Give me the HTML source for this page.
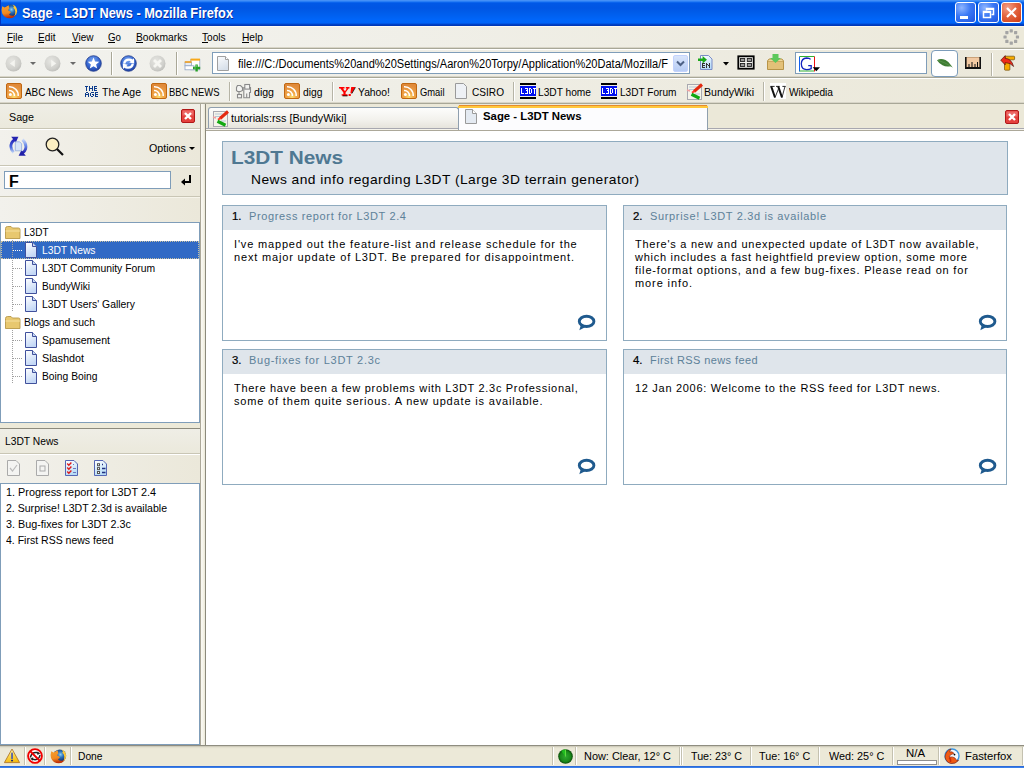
<!DOCTYPE html>
<html><head><meta charset="utf-8"><style>
html,body{margin:0;padding:0;width:1024px;height:768px;overflow:hidden;background:#fff;}
body{position:relative;font-family:"Liberation Sans",sans-serif;}
div,svg{position:absolute;box-sizing:border-box;}
.t{white-space:pre;}
</style></head><body>
<div style="left:0px;top:0px;width:1024px;height:26px;background:linear-gradient(to bottom,#4a94f8 0px,#3c8cf6 1px,#1470f4 2px,#0058e6 3px,#0056e4 8px,#005ce9 12px,#0062f3 17px,#0066fa 20px,#0064f8 23px,#004bd4 24px,#0038b8 25px,#0038b8 26px)"></div><div style="left:0px;top:0px;width:1px;height:26px;background:#0034c0"></div><svg style="left:1px;top:3px;" width="17" height="17" viewBox="0 0 17 17"><defs><radialGradient id="ffg1" cx="0.55" cy="0.4" r="0.6"><stop offset="0" stop-color="#8ad0f4"/><stop offset="0.4" stop-color="#2a70b8"/><stop offset="1" stop-color="#0a1e5a"/></radialGradient><linearGradient id="ffo1" x1="0" y1="0" x2="0.2" y2="1"><stop offset="0" stop-color="#f6a030"/><stop offset="0.65" stop-color="#f08a20"/><stop offset="1" stop-color="#c03008"/></linearGradient></defs><circle cx="9.8" cy="7.8" r="6.4" fill="url(#ffg1)"/><path d="M1.2 3.2 L3.6 4.4 L7.6 2.2 L8.4 5.4 L7 7.2 Q8.6 7.6 10 9.4 Q8.6 10.2 8 11.8 Q10.5 13.2 13.2 12.4 L14.8 11.2 Q14 14.8 9 15.3 Q3 15.3 1 10 Q0.2 6.6 1.2 3.2Z" fill="url(#ffo1)"/><path d="M11.6 1.6 Q15.9 3 16.2 8.2 Q16 11.4 13.4 13.2 Q14.4 11 14.3 8.6 Q14.1 5.8 12.2 4.4 L13 3.4Z" fill="#fcc838"/></svg><div style="left:955px;top:2px;width:21px;height:21px;background:radial-gradient(circle at 30% 25%,#8fb6ff 0,#3a78f5 45%,#1f55e0 100%);border:1px solid #fff;border-radius:3px;"></div><div style="left:978px;top:2px;width:21px;height:21px;background:radial-gradient(circle at 30% 25%,#8fb6ff 0,#3a78f5 45%,#1f55e0 100%);border:1px solid #fff;border-radius:3px;"></div><div style="left:1001px;top:2px;width:21px;height:21px;background:radial-gradient(circle at 30% 25%,#f3a08a 0,#e3643e 45%,#cf3a12 100%);border:1px solid #fff;border-radius:3px;"></div><div style="left:960px;top:16px;width:8px;height:3px;background:#fff"></div><svg style="left:978px;top:2px;" width="21" height="21" viewBox="0 0 21 21"><rect x="5.5" y="9.5" width="7" height="6" fill="none" stroke="#fff" stroke-width="1.5"/><rect x="5" y="9" width="8" height="2" fill="#fff"/><path d="M8.5 8.5 V6.5 H15.5 V12.5 H13.5" fill="none" stroke="#fff" stroke-width="1.5"/><rect x="8" y="6" width="8" height="2" fill="#fff"/></svg><svg style="left:1001px;top:2px;" width="21" height="21" viewBox="0 0 21 21"><path d="M6 6 L15 15 M15 6 L6 15" stroke="#fff" stroke-width="2.2"/></svg><div style="left:0px;top:26px;width:1024px;height:22px;background:linear-gradient(to right,#f3f3ef 0,#f0efe8 40%,#ece9da 100%)"></div><div style="left:0px;top:26px;width:1024px;height:1px;background:linear-gradient(to right,#fdfcf8,#fcf8ea)"></div><div style="left:0px;top:47px;width:1024px;height:1px;background:#d8d5c8"></div><div style="left:0px;top:48px;width:1024px;height:1px;background:#a8a797"></div><div style="left:0px;top:49px;width:1024px;height:1px;background:#ffffff"></div><div style="left:7px;top:42px;width:6px;height:1px;background:#000"></div><div style="left:38px;top:42px;width:6px;height:1px;background:#000"></div><div style="left:72px;top:42px;width:7px;height:1px;background:#000"></div><div style="left:108px;top:42px;width:7px;height:1px;background:#000"></div><div style="left:136px;top:42px;width:7px;height:1px;background:#000"></div><div style="left:202px;top:42px;width:6px;height:1px;background:#000"></div><div style="left:242px;top:42px;width:7px;height:1px;background:#000"></div><svg style="left:1002px;top:28px;" width="18" height="18" viewBox="0 0 18 18"><rect x="13.85" y="7.40" width="3.2" height="3.2" rx="0.6" fill="#a4a4a4"/><rect x="12.03" y="11.78" width="3.2" height="3.2" rx="0.6" fill="#a4a4a4"/><rect x="7.65" y="13.60" width="3.2" height="3.2" rx="0.6" fill="#a4a4a4"/><rect x="3.27" y="11.78" width="3.2" height="3.2" rx="0.6" fill="#a4a4a4"/><rect x="1.45" y="7.40" width="3.2" height="3.2" rx="0.6" fill="#a4a4a4"/><rect x="3.27" y="3.02" width="3.2" height="3.2" rx="0.6" fill="#a4a4a4"/><rect x="7.65" y="1.20" width="3.2" height="3.2" rx="0.6" fill="#a4a4a4"/><rect x="12.03" y="3.02" width="3.2" height="3.2" rx="0.6" fill="#a4a4a4"/></svg><div style="left:0px;top:50px;width:1024px;height:27px;background:linear-gradient(to right,#f2f2ee 0,#efeee7 40%,#ebe8da 100%)"></div><div style="left:0px;top:76px;width:1024px;height:1px;background:#d8d5c8"></div><div style="left:0px;top:77px;width:1024px;height:1px;background:#a8a797"></div><div style="left:0px;top:78px;width:1024px;height:1px;background:#ffffff"></div><svg style="left:5px;top:55px;" width="17" height="17" viewBox="0 0 17 17"><defs><radialGradient id="gg1" cx="0.4" cy="0.35" r="0.7"><stop offset="0" stop-color="#e6e6e2"/><stop offset="0.7" stop-color="#d0d0cc"/><stop offset="1" stop-color="#bdbdb9"/></radialGradient></defs><circle cx="8.5" cy="8.5" r="8" fill="url(#gg1)"/><path d="M9.8 4.8 L4.8 8.4 L9.8 11.9Z" fill="#f4f4f0"/></svg><svg style="left:44px;top:55px;" width="17" height="17" viewBox="0 0 17 17"><defs><radialGradient id="gg2" cx="0.4" cy="0.35" r="0.7"><stop offset="0" stop-color="#e6e6e2"/><stop offset="0.7" stop-color="#d0d0cc"/><stop offset="1" stop-color="#bdbdb9"/></radialGradient></defs><circle cx="8.5" cy="8.5" r="8" fill="url(#gg2)"/><path d="M7.2 4.8 L12.2 8.4 L7.2 11.9Z" fill="#f4f4f0"/></svg><svg style="left:30px;top:62px;" width="6" height="3" viewBox="0 0 6 3"><path d="M0 0H6L3 3Z" fill="#6a6a6a"/></svg><svg style="left:70px;top:62px;" width="6" height="3" viewBox="0 0 6 3"><path d="M0 0H6L3 3Z" fill="#6a6a6a"/></svg><svg style="left:85px;top:55px;" width="17" height="17" viewBox="0 0 17 17"><defs><radialGradient id="bg1" cx="0.45" cy="0.3" r="0.75"><stop offset="0" stop-color="#7aa6f0"/><stop offset="0.55" stop-color="#3768d2"/><stop offset="1" stop-color="#1c3c9c"/></radialGradient></defs><circle cx="8.5" cy="8.5" r="7.8" fill="url(#bg1)" stroke="#203a8a" stroke-width="0.8"/><path d="M8.5 2.6 L10.1 6.6 L14.3 6.7 L11.1 9.4 L12.2 13.6 L8.5 11.3 L4.8 13.6 L5.9 9.4 L2.7 6.7 L6.9 6.6Z" fill="#fff"/></svg><svg style="left:120px;top:55px;" width="17" height="17" viewBox="0 0 17 17"><defs><radialGradient id="bg2" cx="0.45" cy="0.3" r="0.75"><stop offset="0" stop-color="#7aa6f0"/><stop offset="0.55" stop-color="#3768d2"/><stop offset="1" stop-color="#1c3c9c"/></radialGradient></defs><circle cx="8.5" cy="8.5" r="7.8" fill="url(#bg2)" stroke="#203a8a" stroke-width="0.8"/><path d="M4.2 8.6 Q4.8 4.6 9 4.6 Q11 4.6 12 5.6" fill="none" stroke="#fff" stroke-width="2.4"/><path d="M14 3.2 L14.2 8.6 L9.2 7.4Z" fill="#fff"/><path d="M12.8 8.6 Q12.2 12.6 8 12.6 Q6 12.6 5 11.6" fill="none" stroke="#fff" stroke-width="2.4"/><path d="M3 14 L2.8 8.6 L7.8 9.8Z" fill="#fff"/></svg><svg style="left:149px;top:55px;" width="17" height="17" viewBox="0 0 17 17"><defs><radialGradient id="gg3" cx="0.4" cy="0.35" r="0.7"><stop offset="0" stop-color="#e6e6e2"/><stop offset="0.7" stop-color="#d0d0cc"/><stop offset="1" stop-color="#bdbdb9"/></radialGradient></defs><circle cx="8.5" cy="8.5" r="8" fill="url(#gg3)"/><path d="M5 5 L12 12 M12 5 L5 12" stroke="#f6f6f2" stroke-width="2.8"/></svg><div style="left:111px;top:52px;width:1px;height:23px;background:#a9a797"></div><div style="left:112px;top:52px;width:1px;height:23px;background:#fff"></div><div style="left:176px;top:52px;width:1px;height:23px;background:#a9a797"></div><div style="left:177px;top:52px;width:1px;height:23px;background:#fff"></div><svg style="left:184px;top:58px;" width="18" height="15" viewBox="0 0 18 15"><rect x="6.8" y="1.4" width="9" height="10.4" fill="#fff" stroke="#90a4c4" stroke-width="0.8"/><rect x="6.6" y="0.6" width="9.4" height="2" fill="#f8a818"/><rect x="1" y="4.2" width="6.4" height="3.6" fill="#e8ecf2" stroke="#90a4c4" stroke-width="0.8"/><rect x="0.8" y="3.2" width="6.8" height="1.6" fill="#f0a020"/><rect x="1" y="7.8" width="9" height="4" fill="#fff" stroke="#90a4c4" stroke-width="0.8"/><path d="M12.6 6.4 V13.6 M9 10 H16.2" stroke="#28a028" stroke-width="2.4"/><path d="M12.6 7 V9 M10 10 H12" stroke="#7ad07a" stroke-width="0.8"/></svg><div style="left:212px;top:52px;width:478px;height:22px;background:#fff;border:1px solid #7f9db9"></div><svg style="left:217px;top:56px;" width="12" height="15" viewBox="0 0 12 15"><defs><linearGradient id="urg" x1="0" y1="0" x2="0.4" y2="1"><stop offset="0" stop-color="#fbfcfd"/><stop offset="1" stop-color="#d8e0ea"/></linearGradient></defs><path d="M0.5 0.5 H8.5 L11.5 3.5 V14.5 H0.5Z" fill="url(#urg)" stroke="#a0a0a0"/><path d="M8.5 0.5 V3.5 H11.5" fill="#fff" stroke="#a0a0a0"/></svg><div style="left:673px;top:55px;width:15px;height:17px;background:linear-gradient(#d9e5fb,#b8cdf5);border-radius:2px;border:1px solid #c3d3fd"></div><svg style="left:673px;top:55px;" width="15" height="17" viewBox="0 0 15 17"><path d="M4 6.5 L7.5 10 L11 6.5" fill="none" stroke="#4d6185" stroke-width="2"/></svg><svg style="left:697px;top:55px;" width="16" height="16" viewBox="0 0 16 16"><defs><linearGradient id="trg" x1="0" y1="0" x2="0.3" y2="1"><stop offset="0" stop-color="#fff"/><stop offset="1" stop-color="#b8dcf8"/></linearGradient></defs><path d="M3.5 0.5 H11.5 L15 4 V14.5 H3.5Z" fill="url(#trg)" stroke="#7a8cc8"/><path d="M1 3.6 H5.6 V1 L10 4.8 L5.6 8.6 V6 H1Z" fill="#1aa81a"/></svg><svg style="left:702px;top:63px;shape-rendering:crispEdges;" width="8" height="5" viewBox="0 0 8 5"><rect x="0" y="0" width="3" height="1" fill="#333"/><rect x="4" y="0" width="1" height="1" fill="#333"/><rect x="7" y="0" width="1" height="1" fill="#333"/><rect x="0" y="1" width="1" height="1" fill="#333"/><rect x="4" y="1" width="2" height="1" fill="#333"/><rect x="7" y="1" width="1" height="1" fill="#333"/><rect x="0" y="2" width="3" height="1" fill="#333"/><rect x="4" y="2" width="1" height="1" fill="#333"/><rect x="6" y="2" width="2" height="1" fill="#333"/><rect x="0" y="3" width="1" height="1" fill="#333"/><rect x="4" y="3" width="1" height="1" fill="#333"/><rect x="7" y="3" width="1" height="1" fill="#333"/><rect x="0" y="4" width="3" height="1" fill="#333"/><rect x="4" y="4" width="1" height="1" fill="#333"/><rect x="7" y="4" width="1" height="1" fill="#333"/></svg><svg style="left:723px;top:62px;" width="6" height="4" viewBox="0 0 6 4"><path d="M0 0H6L3 3.5Z" fill="#000"/></svg><svg style="left:737px;top:55px;" width="18" height="15" viewBox="0 0 18 15"><rect x="1.3" y="1.3" width="15.4" height="12.4" fill="#f4f4f0" stroke="#000" stroke-width="1.8"/><g fill="#9a9a9a" stroke="#222" stroke-width="0.9"><rect x="3.5" y="3.5" width="4.2" height="3"/><rect x="10.3" y="3.5" width="4.2" height="3"/><rect x="3.5" y="8.5" width="4.2" height="3"/><rect x="10.3" y="8.5" width="4.2" height="3"/></g></svg><svg style="left:767px;top:54px;" width="17" height="16" viewBox="0 0 17 16"><path d="M0.5 7 H16.5 V15.5 H0.5Z" fill="#e3c178" stroke="#b79448"/><path d="M0.5 7 L2 5 H15 L16.5 7" fill="#f0d79a" stroke="#b79448"/><path d="M5.5 0 H11.5 V4 H14 L8.5 9 L3 4 H5.5Z" fill="#5cc85c"/></svg><div style="left:795px;top:52px;width:132px;height:22px;background:#fff;border:1px solid #7f9db9"></div><svg style="left:799px;top:56px;" width="22" height="16" viewBox="0 0 22 16"><path d="M0.5 15.5 V0.5" stroke="#1060f0"/><path d="M0.5 0.5 H15.5 M0.5 15 H15" stroke="#30b030"/><path d="M15.5 0.5 V15.5" stroke="#f01010"/><path d="M11.6 3.4 Q10.5 2 7.6 2 Q2.5 2.2 2.3 7.8 Q2.5 13.6 7.6 13.6 Q10.5 13.6 12.2 12.6 V9.6 H9.2" fill="none" stroke="#1424c0" stroke-width="1.3"/><path d="M13.6 11.3 H21 L17.3 15.2Z" fill="#000"/></svg><div style="left:931px;top:50px;width:27px;height:27px;background:#fff;border:1px solid #7c9cba;border-radius:4px"></div><svg style="left:936px;top:57px;" width="18" height="13" viewBox="0 0 18 13"><path d="M1 3.2 Q4.5 1 9.5 3 Q13.5 5 15.2 8.6 L16.8 10.8 L14.6 9.2 Q10 10.2 6.5 8.2 Q2.6 6 1 3.2Z" fill="#3f7d34"/><path d="M2 3.4 Q8 5 14.6 9" stroke="#5e9a50" stroke-width="0.7" fill="none"/></svg><svg style="left:965px;top:57px;" width="16" height="12" viewBox="0 0 16 12"><rect x="0" y="0" width="16" height="12" fill="#f2c9a2"/><rect x="0" y="0" width="16" height="1" fill="#caa27a"/><rect x="0" y="0" width="1.6" height="12" fill="#111"/><rect x="14.4" y="0" width="1.6" height="12" fill="#111"/><rect x="0" y="10" width="16" height="2" fill="#111"/><path d="M4 7 V10 M7 5 V10 M10 7 V10 M12.5 5 V10" stroke="#111" stroke-width="1"/></svg><div style="left:991px;top:53px;width:1px;height:23px;background:#b6b4a6"></div><div style="left:992px;top:53px;width:1px;height:23px;background:#fff"></div><svg style="left:1000px;top:55px;" width="17" height="17" viewBox="0 0 17 17"><rect x="5" y="1.2" width="9.6" height="3.6" rx="0.8" fill="#f7aa00" stroke="#5a3a00" stroke-width="0.6"/><rect x="4.5" y="7" width="5.4" height="8.2" rx="0.8" fill="#f7aa00" stroke="#5a3a00" stroke-width="0.6"/><path d="M0.7 5.2 L5.2 0.6 V3.3 Q11.5 3.6 13.6 11.5 Q10.5 7.6 5.2 7.7 V9.9 Z" fill="#ee2a1a" stroke="#3a0a00" stroke-width="0.6"/></svg><div style="left:0px;top:79px;width:1024px;height:24px;background:linear-gradient(to right,#f1f1ec 0,#efeee6 40%,#ebe8d9 100%)"></div><div style="left:0px;top:102px;width:1024px;height:1px;background:#d8d5c8"></div><div style="left:0px;top:103px;width:1024px;height:1px;background:#a8a797"></div><svg style="left:6px;top:83px;" width="16" height="16" viewBox="0 0 16 16"><defs><radialGradient id="rg6" cx="0.5" cy="0.9" r="0.8"><stop offset="0" stop-color="#fce070"/><stop offset="0.35" stop-color="#f2a848"/><stop offset="1" stop-color="#e08a3a"/></radialGradient></defs><rect x="0.5" y="0.5" width="15" height="15" rx="1.5" fill="url(#rg6)" stroke="#c06812"/><circle cx="4.4" cy="11.6" r="1.5" fill="#fff"/><path d="M3 7.6 A5 5 0 0 1 8.4 13 M3 3.8 A8.7 8.7 0 0 1 12.2 13" fill="none" stroke="#fff" stroke-width="1.5"/></svg><svg style="left:85px;top:86px;shape-rendering:crispEdges;" width="12" height="5" viewBox="0 0 12 5"><rect x="0" y="0" width="3" height="1" fill="#0b3b8c"/><rect x="4" y="0" width="1" height="1" fill="#0b3b8c"/><rect x="7" y="0" width="1" height="1" fill="#0b3b8c"/><rect x="9" y="0" width="3" height="1" fill="#0b3b8c"/><rect x="1" y="1" width="1" height="1" fill="#0b3b8c"/><rect x="4" y="1" width="1" height="1" fill="#0b3b8c"/><rect x="7" y="1" width="1" height="1" fill="#0b3b8c"/><rect x="9" y="1" width="1" height="1" fill="#0b3b8c"/><rect x="1" y="2" width="1" height="1" fill="#0b3b8c"/><rect x="4" y="2" width="4" height="1" fill="#0b3b8c"/><rect x="9" y="2" width="3" height="1" fill="#0b3b8c"/><rect x="1" y="3" width="1" height="1" fill="#0b3b8c"/><rect x="4" y="3" width="1" height="1" fill="#0b3b8c"/><rect x="7" y="3" width="1" height="1" fill="#0b3b8c"/><rect x="9" y="3" width="1" height="1" fill="#0b3b8c"/><rect x="1" y="4" width="1" height="1" fill="#0b3b8c"/><rect x="4" y="4" width="1" height="1" fill="#0b3b8c"/><rect x="7" y="4" width="1" height="1" fill="#0b3b8c"/><rect x="9" y="4" width="3" height="1" fill="#0b3b8c"/></svg><svg style="left:85px;top:92px;shape-rendering:crispEdges;" width="13" height="5" viewBox="0 0 13 5"><rect x="1" y="0" width="2" height="1" fill="#0b3b8c"/><rect x="6" y="0" width="3" height="1" fill="#0b3b8c"/><rect x="10" y="0" width="3" height="1" fill="#0b3b8c"/><rect x="0" y="1" width="1" height="1" fill="#0b3b8c"/><rect x="3" y="1" width="1" height="1" fill="#0b3b8c"/><rect x="5" y="1" width="1" height="1" fill="#0b3b8c"/><rect x="10" y="1" width="1" height="1" fill="#0b3b8c"/><rect x="0" y="2" width="4" height="1" fill="#0b3b8c"/><rect x="5" y="2" width="1" height="1" fill="#0b3b8c"/><rect x="7" y="2" width="2" height="1" fill="#0b3b8c"/><rect x="10" y="2" width="3" height="1" fill="#0b3b8c"/><rect x="0" y="3" width="1" height="1" fill="#0b3b8c"/><rect x="3" y="3" width="1" height="1" fill="#0b3b8c"/><rect x="5" y="3" width="1" height="1" fill="#0b3b8c"/><rect x="8" y="3" width="1" height="1" fill="#0b3b8c"/><rect x="10" y="3" width="1" height="1" fill="#0b3b8c"/><rect x="0" y="4" width="1" height="1" fill="#0b3b8c"/><rect x="3" y="4" width="1" height="1" fill="#0b3b8c"/><rect x="6" y="4" width="2" height="1" fill="#0b3b8c"/><rect x="10" y="4" width="3" height="1" fill="#0b3b8c"/></svg><svg style="left:151px;top:83px;" width="16" height="16" viewBox="0 0 16 16"><defs><radialGradient id="rg151" cx="0.5" cy="0.9" r="0.8"><stop offset="0" stop-color="#fce070"/><stop offset="0.35" stop-color="#f2a848"/><stop offset="1" stop-color="#e08a3a"/></radialGradient></defs><rect x="0.5" y="0.5" width="15" height="15" rx="1.5" fill="url(#rg151)" stroke="#c06812"/><circle cx="4.4" cy="11.6" r="1.5" fill="#fff"/><path d="M3 7.6 A5 5 0 0 1 8.4 13 M3 3.8 A8.7 8.7 0 0 1 12.2 13" fill="none" stroke="#fff" stroke-width="1.5"/></svg><div style="left:229px;top:82px;width:1px;height:19px;background:#b6b4a6"></div><div style="left:230px;top:82px;width:1px;height:19px;background:#fff"></div><svg style="left:235px;top:83px;" width="18" height="16" viewBox="0 0 18 16"><g fill="#f4f4f2" stroke="#8a8a8a" stroke-width="1.1"><path d="M2.5 2.5 H5.5 L7.5 4.5 V7.5 L5.5 8.5 H2.5 L1.5 7.5 V4.5Z"/><path d="M4 8.5 V11.5" fill="none"/><rect x="2.5" y="11.5" width="4" height="3.3"/><path d="M8.8 4.5 H15.5 V9.5 H14.5 V14.8 H8.8Z"/><rect x="9.8" y="1.5" width="4.8" height="4.6"/><path d="M11.7 10.5 V14.8" fill="none"/></g></svg><svg style="left:284px;top:83px;" width="16" height="16" viewBox="0 0 16 16"><defs><radialGradient id="rg284" cx="0.5" cy="0.9" r="0.8"><stop offset="0" stop-color="#fce070"/><stop offset="0.35" stop-color="#f2a848"/><stop offset="1" stop-color="#e08a3a"/></radialGradient></defs><rect x="0.5" y="0.5" width="15" height="15" rx="1.5" fill="url(#rg284)" stroke="#c06812"/><circle cx="4.4" cy="11.6" r="1.5" fill="#fff"/><path d="M3 7.6 A5 5 0 0 1 8.4 13 M3 3.8 A8.7 8.7 0 0 1 12.2 13" fill="none" stroke="#fff" stroke-width="1.5"/></svg><div style="left:332px;top:82px;width:1px;height:19px;background:#b6b4a6"></div><div style="left:333px;top:82px;width:1px;height:19px;background:#fff"></div><svg style="left:338px;top:86px;" width="18" height="11" viewBox="0 0 18 11"><path d="M4.5 9.6 H9.5" stroke="#000" stroke-width="1.4"/><path d="M1 1 H6.5 V2.6 H5 L7 5.2 L8.8 2.6 H7.8 V1 H11.5 V2.6 H10.6 L7.6 6.4 V8.2 H9.4 V9.6 H3.6 V8.2 H5.4 V6.4 L2.4 2.6 H1Z" fill="#ff0000"/><path d="M13.2 1 H17.4 L13.8 7.2 H12.4Z" fill="#ff0000"/><path d="M17.4 1.4 L13.8 7.6" stroke="#000" stroke-width="0.8"/><rect x="10.6" y="8" width="2.2" height="2" fill="#ff0000"/></svg><svg style="left:401px;top:83px;" width="16" height="16" viewBox="0 0 16 16"><defs><radialGradient id="rg401" cx="0.5" cy="0.9" r="0.8"><stop offset="0" stop-color="#fce070"/><stop offset="0.35" stop-color="#f2a848"/><stop offset="1" stop-color="#e08a3a"/></radialGradient></defs><rect x="0.5" y="0.5" width="15" height="15" rx="1.5" fill="url(#rg401)" stroke="#c06812"/><circle cx="4.4" cy="11.6" r="1.5" fill="#fff"/><path d="M3 7.6 A5 5 0 0 1 8.4 13 M3 3.8 A8.7 8.7 0 0 1 12.2 13" fill="none" stroke="#fff" stroke-width="1.5"/></svg><svg style="left:455px;top:83px;" width="12" height="16" viewBox="0 0 12 16"><path d="M0.5 0.5 H8.5 L11.5 3.5 V15.5 H0.5Z" fill="#eef1f5" stroke="#9a9a9a"/></svg><div style="left:513px;top:82px;width:1px;height:19px;background:#b6b4a6"></div><div style="left:514px;top:82px;width:1px;height:19px;background:#fff"></div><svg style="left:520px;top:83px;shape-rendering:crispEdges;" width="16" height="16" viewBox="0 0 16 16"><rect x="0" y="0" width="16" height="2" fill="#000"/><rect x="0" y="3" width="16" height="10" fill="#0010f0"/><rect x="0" y="14" width="16" height="2" fill="#000"/></svg><svg style="left:521px;top:88px;shape-rendering:crispEdges;" width="15" height="6" viewBox="0 0 15 6"><rect x="0" y="0" width="1" height="1" fill="#fff"/><rect x="4" y="0" width="3" height="1" fill="#fff"/><rect x="8" y="0" width="2" height="1" fill="#fff"/><rect x="12" y="0" width="3" height="1" fill="#fff"/><rect x="0" y="1" width="1" height="1" fill="#fff"/><rect x="6" y="1" width="1" height="1" fill="#fff"/><rect x="8" y="1" width="1" height="1" fill="#fff"/><rect x="10" y="1" width="1" height="1" fill="#fff"/><rect x="13" y="1" width="1" height="1" fill="#fff"/><rect x="0" y="2" width="1" height="1" fill="#fff"/><rect x="5" y="2" width="2" height="1" fill="#fff"/><rect x="8" y="2" width="1" height="1" fill="#fff"/><rect x="10" y="2" width="1" height="1" fill="#fff"/><rect x="13" y="2" width="1" height="1" fill="#fff"/><rect x="0" y="3" width="1" height="1" fill="#fff"/><rect x="6" y="3" width="1" height="1" fill="#fff"/><rect x="8" y="3" width="1" height="1" fill="#fff"/><rect x="10" y="3" width="1" height="1" fill="#fff"/><rect x="13" y="3" width="1" height="1" fill="#fff"/><rect x="0" y="4" width="1" height="1" fill="#fff"/><rect x="6" y="4" width="1" height="1" fill="#fff"/><rect x="8" y="4" width="1" height="1" fill="#fff"/><rect x="10" y="4" width="1" height="1" fill="#fff"/><rect x="13" y="4" width="1" height="1" fill="#fff"/><rect x="0" y="5" width="3" height="1" fill="#fff"/><rect x="4" y="5" width="3" height="1" fill="#fff"/><rect x="8" y="5" width="2" height="1" fill="#fff"/><rect x="13" y="5" width="1" height="1" fill="#fff"/></svg><svg style="left:601px;top:83px;shape-rendering:crispEdges;" width="16" height="16" viewBox="0 0 16 16"><rect x="0" y="0" width="16" height="2" fill="#000"/><rect x="0" y="3" width="16" height="10" fill="#0010f0"/><rect x="0" y="14" width="16" height="2" fill="#000"/></svg><svg style="left:602px;top:88px;shape-rendering:crispEdges;" width="15" height="6" viewBox="0 0 15 6"><rect x="0" y="0" width="1" height="1" fill="#fff"/><rect x="4" y="0" width="3" height="1" fill="#fff"/><rect x="8" y="0" width="2" height="1" fill="#fff"/><rect x="12" y="0" width="3" height="1" fill="#fff"/><rect x="0" y="1" width="1" height="1" fill="#fff"/><rect x="6" y="1" width="1" height="1" fill="#fff"/><rect x="8" y="1" width="1" height="1" fill="#fff"/><rect x="10" y="1" width="1" height="1" fill="#fff"/><rect x="13" y="1" width="1" height="1" fill="#fff"/><rect x="0" y="2" width="1" height="1" fill="#fff"/><rect x="5" y="2" width="2" height="1" fill="#fff"/><rect x="8" y="2" width="1" height="1" fill="#fff"/><rect x="10" y="2" width="1" height="1" fill="#fff"/><rect x="13" y="2" width="1" height="1" fill="#fff"/><rect x="0" y="3" width="1" height="1" fill="#fff"/><rect x="6" y="3" width="1" height="1" fill="#fff"/><rect x="8" y="3" width="1" height="1" fill="#fff"/><rect x="10" y="3" width="1" height="1" fill="#fff"/><rect x="13" y="3" width="1" height="1" fill="#fff"/><rect x="0" y="4" width="1" height="1" fill="#fff"/><rect x="6" y="4" width="1" height="1" fill="#fff"/><rect x="8" y="4" width="1" height="1" fill="#fff"/><rect x="10" y="4" width="1" height="1" fill="#fff"/><rect x="13" y="4" width="1" height="1" fill="#fff"/><rect x="0" y="5" width="3" height="1" fill="#fff"/><rect x="4" y="5" width="3" height="1" fill="#fff"/><rect x="8" y="5" width="2" height="1" fill="#fff"/><rect x="13" y="5" width="1" height="1" fill="#fff"/></svg><svg style="left:686px;top:83px;" width="17" height="17" viewBox="0 0 17 17"><rect x="1.5" y="1.5" width="14" height="15" fill="#f6f4ea" stroke="#a8a8b0" stroke-width="1"/><path d="M3 4 H11 M3 6.5 H9 M9 11 H14" stroke="#b8c8d8" stroke-width="1"/><path d="M1 7 L4 8" stroke="#f0a0a0" stroke-width="1.5"/><path d="M16 1.5 L8 8.5" stroke="#e42a10" stroke-width="3"/><path d="M8.5 8 L6 9.8" stroke="#ff3a2a" stroke-width="2"/><path d="M5.5 11.2 L13.5 15.2" stroke="#12a812" stroke-width="3.2"/></svg><div style="left:763px;top:82px;width:1px;height:19px;background:#b6b4a6"></div><div style="left:764px;top:82px;width:1px;height:19px;background:#fff"></div><svg style="left:770px;top:83px;" width="16" height="16" viewBox="0 0 16 16"><rect width="16" height="16" fill="#fff"/><path d="M0.3 3.4 H4.6 M6 3.4 H9.6 M12.4 3.4 H15.7" stroke="#111" stroke-width="0.9"/><path d="M1.2 3.4 L5 14.5 M8.2 3.4 L12 14.5" stroke="#111" stroke-width="2"/><path d="M5 14.5 L8.6 5.6 M12 14.5 L15 3.4" stroke="#222" stroke-width="0.9"/></svg><div style="left:0px;top:104px;width:201px;height:642px;background:#ece9d8"></div><div style="left:0px;top:104px;width:200px;height:25px;background:linear-gradient(to bottom,#efeee6,#ebe9dc)"></div><div style="left:0px;top:128px;width:200px;height:1px;background:#c9c6b5"></div><div style="left:0px;top:129px;width:200px;height:1px;background:#fff"></div><svg style="left:181px;top:109px;" width="14" height="14" viewBox="0 0 14 14"><rect x="0.5" y="0.5" width="13" height="13" rx="1.5" fill="#e4403c" stroke="#b01818"/><rect x="1.5" y="1.5" width="11" height="5" fill="#f49090" opacity="0.5"/><path d="M4 4 L10 10 M10 4 L4 10" stroke="#fff" stroke-width="2.4"/></svg><div style="left:0px;top:130px;width:200px;height:35px;background:linear-gradient(to right,#f2f1ec,#ebe8da)"></div><div style="left:0px;top:165px;width:200px;height:1px;background:#c9c6b5"></div><div style="left:0px;top:166px;width:200px;height:1px;background:#fff"></div><svg style="left:9px;top:136px;" width="19" height="21" viewBox="0 0 19 21"><defs><linearGradient id="rfl" x1="0" y1="0" x2="0" y2="1"><stop offset="0" stop-color="#2424b8"/><stop offset="0.6" stop-color="#4a6ae0"/><stop offset="1" stop-color="#c0d4f4"/></linearGradient><linearGradient id="rfr" x1="0" y1="0" x2="0" y2="1"><stop offset="0" stop-color="#c8d8f8"/><stop offset="0.45" stop-color="#6a8ae8"/><stop offset="1" stop-color="#2020b0"/></linearGradient></defs><path d="M4.5 16.5 Q0.5 12 2.6 7 Q3.6 5 5.5 3.8" fill="none" stroke="url(#rfl)" stroke-width="2.8"/><path d="M2.2 0.8 H9.4 L6.8 6.6Z" fill="#2424b0"/><path d="M13.5 3.6 Q18 7.5 16.6 13 Q15.8 15.4 13.6 16.8" fill="none" stroke="url(#rfr)" stroke-width="2.8"/><path d="M16.8 19.8 H9.6 L12.4 14.2Z" fill="#2020a8"/><path d="M6.3 5.8 H10.6 L12.6 7.8 V14.8 H6.3Z" fill="#d6e4f8" stroke="#8aa4d8" stroke-width="0.7"/></svg><svg style="left:45px;top:137px;" width="20" height="20" viewBox="0 0 20 20"><circle cx="7.5" cy="7.5" r="6.3" fill="#fcefc2" stroke="#222" stroke-width="1.3"/><path d="M12 12 L18 18" stroke="#111" stroke-width="2.2"/></svg><svg style="left:189px;top:147px;" width="6" height="3" viewBox="0 0 6 3"><path d="M0 0H6L3 3Z" fill="#000"/></svg><div style="left:0px;top:167px;width:200px;height:29px;background:linear-gradient(to right,#f2f1ec,#ebe8da)"></div><div style="left:0px;top:196px;width:200px;height:1px;background:#c9c6b5"></div><div style="left:0px;top:197px;width:200px;height:1px;background:#f6f4ea"></div><div style="left:4px;top:171px;width:167px;height:18px;background:#fff;border:1px solid #7f9db9"></div><svg style="left:181px;top:175px;" width="11" height="11" viewBox="0 0 11 11"><path d="M9 0 V7 H3" fill="none" stroke="#000" stroke-width="2"/><path d="M0 7 L4 3.5 V10.5Z" fill="#000"/></svg><div style="left:0px;top:198px;width:200px;height:24px;background:linear-gradient(to right,#f2f1ec,#ebe8da)"></div><div style="left:0px;top:222px;width:200px;height:201px;background:#fff;border:1px solid #7f9db9"></div><div style="left:1px;top:241px;width:198px;height:18px;background:#316ac5"></div><div style="left:1px;top:241px;width:198px;height:18px;border:1px dotted #c8c0a0"></div><svg style="left:5px;top:226px;" width="16" height="13" viewBox="0 0 16 13"><path d="M0.5 2.5 Q0.5 0.5 2.5 0.5 H6 L7.5 2 H13.5 Q15 2 15 3.5 V12.5 H0.5Z" fill="#e8c870" stroke="#b89848" stroke-width="0.9"/><path d="M0.5 5 H15" stroke="#f6e0a0" stroke-width="1"/></svg><svg style="left:25px;top:242px;" width="12" height="16" viewBox="0 0 12 16"><defs><linearGradient id="dg243" x1="0" y1="0" x2="0.4" y2="1"><stop offset="0" stop-color="#ffffff"/><stop offset="1" stop-color="#c4d8f6"/></linearGradient></defs><path d="M0.5 0.5 H7.5 L11.5 4.5 V15.5 H0.5Z" fill="url(#dg243)" stroke="#40509c"/><path d="M7.5 0.5 V4.5 H11.5" fill="#c8daf4" stroke="#40509c"/></svg><svg style="left:25px;top:260px;" width="12" height="16" viewBox="0 0 12 16"><defs><linearGradient id="dg261" x1="0" y1="0" x2="0.4" y2="1"><stop offset="0" stop-color="#ffffff"/><stop offset="1" stop-color="#c4d8f6"/></linearGradient></defs><path d="M0.5 0.5 H7.5 L11.5 4.5 V15.5 H0.5Z" fill="url(#dg261)" stroke="#40509c"/><path d="M7.5 0.5 V4.5 H11.5" fill="#c8daf4" stroke="#40509c"/></svg><svg style="left:25px;top:278px;" width="12" height="16" viewBox="0 0 12 16"><defs><linearGradient id="dg279" x1="0" y1="0" x2="0.4" y2="1"><stop offset="0" stop-color="#ffffff"/><stop offset="1" stop-color="#c4d8f6"/></linearGradient></defs><path d="M0.5 0.5 H7.5 L11.5 4.5 V15.5 H0.5Z" fill="url(#dg279)" stroke="#40509c"/><path d="M7.5 0.5 V4.5 H11.5" fill="#c8daf4" stroke="#40509c"/></svg><svg style="left:25px;top:296px;" width="12" height="16" viewBox="0 0 12 16"><defs><linearGradient id="dg297" x1="0" y1="0" x2="0.4" y2="1"><stop offset="0" stop-color="#ffffff"/><stop offset="1" stop-color="#c4d8f6"/></linearGradient></defs><path d="M0.5 0.5 H7.5 L11.5 4.5 V15.5 H0.5Z" fill="url(#dg297)" stroke="#40509c"/><path d="M7.5 0.5 V4.5 H11.5" fill="#c8daf4" stroke="#40509c"/></svg><svg style="left:5px;top:316px;" width="16" height="13" viewBox="0 0 16 13"><path d="M0.5 2.5 Q0.5 0.5 2.5 0.5 H6 L7.5 2 H13.5 Q15 2 15 3.5 V12.5 H0.5Z" fill="#e8c870" stroke="#b89848" stroke-width="0.9"/><path d="M0.5 5 H15" stroke="#f6e0a0" stroke-width="1"/></svg><svg style="left:25px;top:332px;" width="12" height="16" viewBox="0 0 12 16"><defs><linearGradient id="dg333" x1="0" y1="0" x2="0.4" y2="1"><stop offset="0" stop-color="#ffffff"/><stop offset="1" stop-color="#c4d8f6"/></linearGradient></defs><path d="M0.5 0.5 H7.5 L11.5 4.5 V15.5 H0.5Z" fill="url(#dg333)" stroke="#40509c"/><path d="M7.5 0.5 V4.5 H11.5" fill="#c8daf4" stroke="#40509c"/></svg><svg style="left:25px;top:350px;" width="12" height="16" viewBox="0 0 12 16"><defs><linearGradient id="dg351" x1="0" y1="0" x2="0.4" y2="1"><stop offset="0" stop-color="#ffffff"/><stop offset="1" stop-color="#c4d8f6"/></linearGradient></defs><path d="M0.5 0.5 H7.5 L11.5 4.5 V15.5 H0.5Z" fill="url(#dg351)" stroke="#40509c"/><path d="M7.5 0.5 V4.5 H11.5" fill="#c8daf4" stroke="#40509c"/></svg><svg style="left:25px;top:368px;" width="12" height="16" viewBox="0 0 12 16"><defs><linearGradient id="dg369" x1="0" y1="0" x2="0.4" y2="1"><stop offset="0" stop-color="#ffffff"/><stop offset="1" stop-color="#c4d8f6"/></linearGradient></defs><path d="M0.5 0.5 H7.5 L11.5 4.5 V15.5 H0.5Z" fill="url(#dg369)" stroke="#40509c"/><path d="M7.5 0.5 V4.5 H11.5" fill="#c8daf4" stroke="#40509c"/></svg><svg style="left:0;top:222px" width="200" height="200"><path d="M12.5 18 V90 M12.5 108 V162" stroke="#a0a0a0" stroke-width="1" stroke-dasharray="1 1"/><path d="M13 28.5 H22" stroke="#fff" stroke-dasharray="1 1"/><path d="M13 46.5 H22" stroke="#a0a0a0" stroke-dasharray="1 1"/><path d="M13 64.5 H22" stroke="#a0a0a0" stroke-dasharray="1 1"/><path d="M13 82.5 H22" stroke="#a0a0a0" stroke-dasharray="1 1"/><path d="M13 118.5 H22" stroke="#a0a0a0" stroke-dasharray="1 1"/><path d="M13 136.5 H22" stroke="#a0a0a0" stroke-dasharray="1 1"/><path d="M13 154.5 H22" stroke="#a0a0a0" stroke-dasharray="1 1"/></svg><div style="left:0px;top:423px;width:201px;height:5px;background:#ece9d8"></div><div style="left:0px;top:428px;width:200px;height:1px;background:#8c8a7c"></div><div style="left:0px;top:429px;width:200px;height:24px;background:linear-gradient(to bottom,#efeee6,#ebe9dc)"></div><div style="left:0px;top:453px;width:200px;height:1px;background:#c9c6b5"></div><div style="left:0px;top:454px;width:200px;height:1px;background:#fff"></div><div style="left:0px;top:455px;width:200px;height:28px;background:linear-gradient(to right,#f2f1ec,#ebe8da)"></div><svg style="left:7px;top:460px;" width="13" height="16" viewBox="0 0 13 16"><path d="M0.5 0.5 H9 L12.5 4 V15.5 H0.5Z" fill="#f4f4f2" stroke="#aaa"/><path d="M3 8 L5.5 11 L10 5" fill="none" stroke="#bbb" stroke-width="1.2"/></svg><svg style="left:36px;top:460px;" width="13" height="16" viewBox="0 0 13 16"><path d="M0.5 0.5 H9 L12.5 4 V15.5 H0.5Z" fill="#f4f4f2" stroke="#aaa"/><rect x="4" y="6" width="5" height="5" fill="none" stroke="#aaa"/></svg><svg style="left:65px;top:460px;" width="13" height="16" viewBox="0 0 13 16"><defs><linearGradient id="ldg1" x1="0" y1="0" x2="0.3" y2="1"><stop offset="0" stop-color="#ffffff"/><stop offset="1" stop-color="#b8dcf6"/></linearGradient></defs><path d="M0.5 0.5 H9 L12.5 4 V15.5 H0.5Z" fill="url(#ldg1)" stroke="#5566b4"/><path d="M2.2 3.6 L3.8 5.2 L6.4 2.4 M2.2 7.6 L3.8 9.2 L6.4 6.4 M2.2 11.6 L3.8 13.2 L6.4 10.4" fill="none" stroke="#e01818" stroke-width="1.4"/><path d="M8 4.5 H9 M8 8.5 H11 M8 12.5 H11" stroke="#6a78c0" stroke-width="1.2"/></svg><svg style="left:94px;top:460px;" width="13" height="16" viewBox="0 0 13 16"><defs><linearGradient id="ldg2" x1="0" y1="0" x2="0.3" y2="1"><stop offset="0" stop-color="#ffffff"/><stop offset="1" stop-color="#b8dcf6"/></linearGradient></defs><path d="M0.5 0.5 H9 L12.5 4 V15.5 H0.5Z" fill="url(#ldg2)" stroke="#5566b4"/><g fill="#555"><rect x="3" y="3.2" width="3" height="3"/><rect x="3" y="7.1" width="3" height="3"/><rect x="3" y="11" width="3" height="3"/></g><g fill="#fff"><rect x="4" y="4.2" width="1" height="1"/><rect x="4" y="8.1" width="1" height="1"/><rect x="4" y="12" width="1" height="1"/></g><path d="M8 4.5 H9 M8 8.5 H11.5 M8 12.5 H11.5" stroke="#203080" stroke-width="1.3"/></svg><div style="left:0px;top:483px;width:200px;height:262px;background:#fff;border:1px solid #7f9db9"></div><div style="left:200px;top:104px;width:1px;height:642px;background:#aca899"></div><div style="left:201px;top:104px;width:4px;height:642px;background:linear-gradient(to right,#fbfaf4,#f6f4ea 50%,#ebe8d8)"></div><div style="left:205px;top:104px;width:1px;height:642px;background:#8c8a7c"></div><div style="left:206px;top:104px;width:818px;height:27px;background:#ebe8d8"></div><div style="left:206px;top:128px;width:818px;height:1px;background:#a8a8b0"></div><div style="left:206px;top:129px;width:818px;height:1px;background:#f6f4ec"></div><div style="left:206px;top:130px;width:818px;height:1px;background:#aca899"></div><div style="left:208px;top:107px;width:251px;height:21px;background:linear-gradient(#fdfdfc,#f2f1ec 60%,#e6e4dc);border:1px solid #8f9fae;border-bottom:none;border-radius:3px 3px 0 0"></div><svg style="left:212px;top:110px;" width="17" height="17" viewBox="0 0 17 17"><rect x="1.5" y="1.5" width="14" height="15" fill="#f6f4ea" stroke="#a8a8b0" stroke-width="1"/><path d="M3 4 H11 M3 6.5 H9 M9 11 H14" stroke="#b8c8d8" stroke-width="1"/><path d="M1 7 L4 8" stroke="#f0a0a0" stroke-width="1.5"/><path d="M16 1.5 L8 8.5" stroke="#e42a10" stroke-width="3"/><path d="M8.5 8 L6 9.8" stroke="#ff3a2a" stroke-width="2"/><path d="M5.5 11.2 L13.5 15.2" stroke="#12a812" stroke-width="3.2"/></svg><div style="left:458px;top:105px;width:250px;height:25px;background:#fcfcfe;border-left:1px solid #8f9fae;border-right:1px solid #8f9fae;border-radius:3px 3px 0 0"></div><div style="left:459px;top:105px;width:248px;height:1px;background:#e68b2c"></div><div style="left:458px;top:106px;width:250px;height:2px;background:#ffc83c"></div><svg style="left:465px;top:109px;" width="12" height="15" viewBox="0 0 12 15"><path d="M0.5 0.5 H7.5 L11.5 4.5 V14.5 H0.5Z" fill="#e4eaf2" stroke="#9a9a9a"/><path d="M7.5 0.5 V4.5 H11.5" fill="#fff" stroke="#9a9a9a"/></svg><svg style="left:1005px;top:110px;" width="14" height="14" viewBox="0 0 14 14"><rect x="0.5" y="0.5" width="13" height="13" rx="1.5" fill="#e4403c" stroke="#b01818"/><rect x="1.5" y="1.5" width="11" height="5" fill="#f49090" opacity="0.5"/><path d="M4 4 L10 10 M10 4 L4 10" stroke="#fff" stroke-width="2.4"/></svg><div style="left:206px;top:131px;width:818px;height:614px;background:#fff"></div><div style="left:222px;top:141px;width:786px;height:54px;background:#dfe5eb;border:1px solid #8fabbf"></div><div style="left:222px;top:205px;width:385px;height:136px;background:#fff;border:1px solid #8fabbf"></div><div style="left:223px;top:206px;width:383px;height:24px;background:#dfe5eb"></div><svg style="left:577px;top:314px;" width="22" height="18" viewBox="0 0 22 18"><ellipse cx="9.6" cy="7.4" rx="7.3" ry="5.1" fill="none" stroke="#1f5a8e" stroke-width="2.9"/><path d="M4 10.5 L2.3 16.3 L9.5 12.4Z" fill="#1f5a8e"/></svg><div style="left:623px;top:205px;width:384px;height:136px;background:#fff;border:1px solid #8fabbf"></div><div style="left:624px;top:206px;width:382px;height:24px;background:#dfe5eb"></div><svg style="left:978px;top:314px;" width="22" height="18" viewBox="0 0 22 18"><ellipse cx="9.6" cy="7.4" rx="7.3" ry="5.1" fill="none" stroke="#1f5a8e" stroke-width="2.9"/><path d="M4 10.5 L2.3 16.3 L9.5 12.4Z" fill="#1f5a8e"/></svg><div style="left:222px;top:349px;width:385px;height:136px;background:#fff;border:1px solid #8fabbf"></div><div style="left:223px;top:350px;width:383px;height:24px;background:#dfe5eb"></div><svg style="left:577px;top:458px;" width="22" height="18" viewBox="0 0 22 18"><ellipse cx="9.6" cy="7.4" rx="7.3" ry="5.1" fill="none" stroke="#1f5a8e" stroke-width="2.9"/><path d="M4 10.5 L2.3 16.3 L9.5 12.4Z" fill="#1f5a8e"/></svg><div style="left:623px;top:349px;width:384px;height:136px;background:#fff;border:1px solid #8fabbf"></div><div style="left:624px;top:350px;width:382px;height:24px;background:#dfe5eb"></div><svg style="left:978px;top:458px;" width="22" height="18" viewBox="0 0 22 18"><ellipse cx="9.6" cy="7.4" rx="7.3" ry="5.1" fill="none" stroke="#1f5a8e" stroke-width="2.9"/><path d="M4 10.5 L2.3 16.3 L9.5 12.4Z" fill="#1f5a8e"/></svg><div style="left:0px;top:745px;width:1024px;height:21px;background:#ece9d8"></div><div style="left:0px;top:745px;width:1024px;height:4px;background:linear-gradient(#8f8d80 0,#8f8d80 1px,#cfccbb 1px,#cfccbb 2px,#e3e0cf 2px,#e3e0cf 3px,#eae7d6 3px)"></div><div style="left:0px;top:766px;width:1024px;height:2px;background:linear-gradient(#2c6ad8 0,#2c6ad8 1px,#3a80ea 1px)"></div><div style="left:24px;top:747px;width:1px;height:18px;background:#c4c1b0"></div><div style="left:25px;top:747px;width:1px;height:18px;background:#fff"></div><div style="left:44px;top:747px;width:1px;height:18px;background:#c4c1b0"></div><div style="left:45px;top:747px;width:1px;height:18px;background:#fff"></div><div style="left:70px;top:747px;width:1px;height:18px;background:#c4c1b0"></div><div style="left:71px;top:747px;width:1px;height:18px;background:#fff"></div><div style="left:552px;top:747px;width:1px;height:18px;background:#c4c1b0"></div><div style="left:553px;top:747px;width:1px;height:18px;background:#fff"></div><div style="left:575px;top:747px;width:1px;height:18px;background:#c4c1b0"></div><div style="left:576px;top:747px;width:1px;height:18px;background:#fff"></div><div style="left:679px;top:747px;width:1px;height:18px;background:#c4c1b0"></div><div style="left:680px;top:747px;width:1px;height:18px;background:#fff"></div><div style="left:681px;top:747px;width:1px;height:18px;background:#c4c1b0"></div><div style="left:682px;top:747px;width:1px;height:18px;background:#fff"></div><div style="left:750px;top:747px;width:1px;height:18px;background:#c4c1b0"></div><div style="left:751px;top:747px;width:1px;height:18px;background:#fff"></div><div style="left:818px;top:747px;width:1px;height:18px;background:#c4c1b0"></div><div style="left:819px;top:747px;width:1px;height:18px;background:#fff"></div><div style="left:892px;top:747px;width:1px;height:18px;background:#c4c1b0"></div><div style="left:893px;top:747px;width:1px;height:18px;background:#fff"></div><div style="left:938px;top:747px;width:1px;height:18px;background:#c4c1b0"></div><div style="left:939px;top:747px;width:1px;height:18px;background:#fff"></div><div style="left:1022px;top:747px;width:1px;height:18px;background:#c4c1b0"></div><div style="left:1023px;top:747px;width:1px;height:18px;background:#fff"></div><svg style="left:4px;top:748px;" width="16" height="16" viewBox="0 0 16 16"><defs><linearGradient id="wtg" x1="0.3" y1="0" x2="0.5" y2="1"><stop offset="0" stop-color="#fffbd0"/><stop offset="0.5" stop-color="#fcd84a"/><stop offset="1" stop-color="#f4b810"/></linearGradient></defs><path d="M8 1 L15.6 14.6 H0.4Z" fill="url(#wtg)" stroke="#b0782a" stroke-width="0.9" stroke-linejoin="round"/><rect x="7.1" y="4.6" width="1.9" height="6.6" rx="0.8" fill="#5a68a8"/><ellipse cx="8.05" cy="12.6" rx="1.1" ry="0.9" fill="#1a2a70"/></svg><svg style="left:27px;top:748px;" width="17" height="17" viewBox="0 0 17 17"><circle cx="8" cy="8" r="6.9" fill="#fff" stroke="#f00000" stroke-width="1.9"/><path d="M3.4 9.5 Q4.5 4.2 9.6 4.6 L11.6 5.2 M13 7 Q12.2 12.2 7 11.6 L5 10.8" stroke="#222" stroke-width="1.5" fill="none"/><path d="M10.2 3.4 L13.2 5.4 L10.4 7Z M6 12.8 L3.2 10.8 L6.2 9.2Z" fill="#222"/><path d="M3.3 3.3 L12.7 12.7" stroke="#f00000" stroke-width="2"/></svg><svg style="left:50px;top:748px;" width="17" height="17" viewBox="0 0 17 17"><defs><radialGradient id="ffg2" cx="0.55" cy="0.4" r="0.6"><stop offset="0" stop-color="#8ad0f4"/><stop offset="0.4" stop-color="#2a70b8"/><stop offset="1" stop-color="#0a1e5a"/></radialGradient><linearGradient id="ffo2" x1="0" y1="0" x2="0.2" y2="1"><stop offset="0" stop-color="#f6a030"/><stop offset="0.65" stop-color="#f08a20"/><stop offset="1" stop-color="#c03008"/></linearGradient></defs><circle cx="9.8" cy="7.8" r="6.4" fill="url(#ffg2)"/><path d="M1.2 3.2 L3.6 4.4 L7.6 2.2 L8.4 5.4 L7 7.2 Q8.6 7.6 10 9.4 Q8.6 10.2 8 11.8 Q10.5 13.2 13.2 12.4 L14.8 11.2 Q14 14.8 9 15.3 Q3 15.3 1 10 Q0.2 6.6 1.2 3.2Z" fill="url(#ffo2)"/><path d="M11.6 1.6 Q15.9 3 16.2 8.2 Q16 11.4 13.4 13.2 Q14.4 11 14.3 8.6 Q14.1 5.8 12.2 4.4 L13 3.4Z" fill="#fcc838"/></svg><svg style="left:558px;top:749px;" width="15" height="15" viewBox="0 0 15 15"><defs><radialGradient id="grg" cx="0.5" cy="0.5" r="0.5"><stop offset="0" stop-color="#30a830"/><stop offset="0.7" stop-color="#1a8a1a"/><stop offset="1" stop-color="#0a4a0a"/></radialGradient></defs><circle cx="7.5" cy="7.5" r="7.3" fill="url(#grg)"/><path d="M7.5 7.5 V0.4 A7.1 7.1 0 0 0 3.2 1.8Z" fill="#20c820" opacity="0.8"/><path d="M7.5 7.5 V0.5" stroke="#60e040" stroke-width="0.9"/></svg><div style="left:897px;top:760px;width:40px;height:5px;background:#fff;border:1px solid #8f8f8f"></div><svg style="left:944px;top:748px;" width="17" height="17" viewBox="0 0 17 17"><circle cx="8" cy="8" r="7" fill="#f4f8fc" stroke="#3a94e0" stroke-width="1.4"/><path d="M1 9 Q2 2 7 1 L5.5 4 Q9 3 10 5.5 Q6 6 5 9 Q9 8.5 11 10 Q12 13 14.5 12.5 Q11.5 16 7 15.5 Q2 14.5 1 9Z" fill="#f05a14" stroke="#7a1a08" stroke-width="0.6"/><path d="M5 10 Q7 10.5 6.5 14" stroke="#c82a08" stroke-width="1.5" fill="none"/><circle cx="10.5" cy="6.6" r="0.9" fill="#000"/></svg>
<div class="t" style="left:22px;top:6px;font-size:14px;line-height:14px;font-weight:bold;color:#fff;transform:scaleX(0.9132);transform-origin:0 0;text-shadow:1px 1px 0 #0a2a9a;">Sage - L3DT News - Mozilla Firefox</div><div class="t" style="left:7px;top:32px;font-size:11px;line-height:11px;font-weight:normal;color:#000;transform:scaleX(0.9022);transform-origin:0 0;">File</div><div class="t" style="left:38px;top:32px;font-size:11px;line-height:11px;font-weight:normal;color:#000;transform:scaleX(0.9226);transform-origin:0 0;">Edit</div><div class="t" style="left:72px;top:32px;font-size:11px;line-height:11px;font-weight:normal;color:#000;transform:scaleX(0.9089);transform-origin:0 0;">View</div><div class="t" style="left:108px;top:32px;font-size:11px;line-height:11px;font-weight:normal;color:#000;transform:scaleX(0.8851);transform-origin:0 0;">Go</div><div class="t" style="left:136px;top:32px;font-size:11px;line-height:11px;font-weight:normal;color:#000;transform:scaleX(0.9358);transform-origin:0 0;">Bookmarks</div><div class="t" style="left:202px;top:32px;font-size:11px;line-height:11px;font-weight:normal;color:#000;transform:scaleX(0.9148);transform-origin:0 0;">Tools</div><div class="t" style="left:242px;top:32px;font-size:11px;line-height:11px;font-weight:normal;color:#000;transform:scaleX(0.9282);transform-origin:0 0;">Help</div><div class="t" style="left:238px;top:58px;font-size:12px;line-height:12px;font-weight:normal;color:#000;transform:scaleX(0.9196);transform-origin:0 0;">file:///C:/Documents%20and%20Settings/Aaron%20Torpy/Application%20Data/Mozilla/F</div><div class="t" style="left:25px;top:87px;font-size:11px;line-height:11px;font-weight:normal;color:#000;transform:scaleX(0.9025);transform-origin:0 0;">ABC News</div><div class="t" style="left:102px;top:87px;font-size:11px;line-height:11px;font-weight:normal;color:#000;transform:scaleX(0.9516);transform-origin:0 0;">The Age</div><div class="t" style="left:169px;top:87px;font-size:11px;line-height:11px;font-weight:normal;color:#000;transform:scaleX(0.8605);transform-origin:0 0;">BBC NEWS</div><div class="t" style="left:254px;top:87px;font-size:11px;line-height:11px;font-weight:normal;color:#000;transform:scaleX(0.9617);transform-origin:0 0;">digg</div><div class="t" style="left:303px;top:87px;font-size:11px;line-height:11px;font-weight:normal;color:#000;transform:scaleX(0.9376);transform-origin:0 0;">digg</div><div class="t" style="left:358px;top:87px;font-size:11px;line-height:11px;font-weight:normal;color:#000;transform:scaleX(0.9394);transform-origin:0 0;">Yahoo!</div><div class="t" style="left:420px;top:87px;font-size:11px;line-height:11px;font-weight:normal;color:#000;transform:scaleX(0.8526);transform-origin:0 0;">Gmail</div><div class="t" style="left:472px;top:87px;font-size:11px;line-height:11px;font-weight:normal;color:#000;transform:scaleX(0.9184);transform-origin:0 0;">CSIRO</div><div class="t" style="left:538px;top:87px;font-size:11px;line-height:11px;font-weight:normal;color:#000;transform:scaleX(0.9253);transform-origin:0 0;">L3DT home</div><div class="t" style="left:620px;top:87px;font-size:11px;line-height:11px;font-weight:normal;color:#000;transform:scaleX(0.9180);transform-origin:0 0;">L3DT Forum</div><div class="t" style="left:704px;top:87px;font-size:11px;line-height:11px;font-weight:normal;color:#000;transform:scaleX(0.9621);transform-origin:0 0;">BundyWiki</div><div class="t" style="left:789px;top:87px;font-size:11px;line-height:11px;font-weight:normal;color:#000;transform:scaleX(0.9227);transform-origin:0 0;">Wikipedia</div><div class="t" style="left:9px;top:112px;font-size:11px;line-height:11px;font-weight:normal;color:#000;transform:scaleX(0.9726);transform-origin:0 0;">Sage</div><div class="t" style="left:149px;top:143px;font-size:11px;line-height:11px;font-weight:normal;color:#000;transform:scaleX(0.9704);transform-origin:0 0;">Options</div><div class="t" style="left:9px;top:174px;font-size:16px;line-height:16px;font-weight:bold;color:#000;">F</div><div class="t" style="left:24px;top:227px;font-size:11px;line-height:11px;font-weight:normal;color:#000;transform:scaleX(0.9106);transform-origin:0 0;">L3DT</div><div class="t" style="left:42px;top:245px;font-size:11px;line-height:11px;font-weight:normal;color:#fff;transform:scaleX(0.9342);transform-origin:0 0;">L3DT News</div><div class="t" style="left:42px;top:263px;font-size:11px;line-height:11px;font-weight:normal;color:#000;transform:scaleX(0.9400);transform-origin:0 0;">L3DT Community Forum</div><div class="t" style="left:42px;top:281px;font-size:11px;line-height:11px;font-weight:normal;color:#000;transform:scaleX(0.9236);transform-origin:0 0;">BundyWiki</div><div class="t" style="left:42px;top:299px;font-size:11px;line-height:11px;font-weight:normal;color:#000;transform:scaleX(0.9443);transform-origin:0 0;">L3DT Users&#x27; Gallery</div><div class="t" style="left:24px;top:317px;font-size:11px;line-height:11px;font-weight:normal;color:#000;transform:scaleX(0.9439);transform-origin:0 0;">Blogs and such</div><div class="t" style="left:42px;top:335px;font-size:11px;line-height:11px;font-weight:normal;color:#000;transform:scaleX(0.9586);transform-origin:0 0;">Spamusement</div><div class="t" style="left:42px;top:353px;font-size:11px;line-height:11px;font-weight:normal;color:#000;transform:scaleX(0.9810);transform-origin:0 0;">Slashdot</div><div class="t" style="left:42px;top:371px;font-size:11px;line-height:11px;font-weight:normal;color:#000;transform:scaleX(0.9355);transform-origin:0 0;">Boing Boing</div><div class="t" style="left:5px;top:436px;font-size:11px;line-height:11px;font-weight:normal;color:#000;transform:scaleX(0.9342);transform-origin:0 0;">L3DT News</div><div class="t" style="left:6px;top:487px;font-size:11px;line-height:11px;font-weight:normal;color:#000;transform:scaleX(0.9865);transform-origin:0 0;">1. Progress report for L3DT 2.4</div><div class="t" style="left:6px;top:503px;font-size:11px;line-height:11px;font-weight:normal;color:#000;transform:scaleX(0.9586);transform-origin:0 0;">2. Surprise! L3DT 2.3d is available</div><div class="t" style="left:6px;top:519px;font-size:11px;line-height:11px;font-weight:normal;color:#000;transform:scaleX(0.9797);transform-origin:0 0;">3. Bug-fixes for L3DT 2.3c</div><div class="t" style="left:6px;top:535px;font-size:11px;line-height:11px;font-weight:normal;color:#000;transform:scaleX(0.9556);transform-origin:0 0;">4. First RSS news feed</div><div class="t" style="left:231px;top:113px;font-size:11px;line-height:11px;font-weight:normal;color:#000;transform:scaleX(0.9849);transform-origin:0 0;">tutorials:rss [BundyWiki]</div><div class="t" style="left:483px;top:111px;font-size:11px;line-height:11px;font-weight:bold;color:#000;transform:scaleX(1.0329);transform-origin:0 0;">Sage - L3DT News</div><div class="t" style="left:231px;top:149px;font-size:18px;line-height:18px;font-weight:bold;color:#4f7892;transform:scaleX(1.1543);transform-origin:0 0;">L3DT News</div><div class="t" style="left:251px;top:173px;font-size:13px;line-height:13px;font-weight:normal;color:#000;transform:scaleX(1.0600);transform-origin:0 0;letter-spacing:0.437px;">News and info regarding L3DT (Large 3D terrain generator)</div><div class="t" style="left:232px;top:212px;font-size:10px;line-height:10px;font-weight:normal;color:#000;transform:scaleX(1.1386);transform-origin:0 0;-webkit-text-stroke:0.2px #000;">1.</div><div class="t" style="left:248.5px;top:212px;font-size:10px;line-height:10px;font-weight:normal;color:#5d8199;transform:scaleX(1.1000);transform-origin:0 0;letter-spacing:0.578px;">Progress report for L3DT 2.4</div><div class="t" style="left:234px;top:240px;font-size:10px;line-height:10px;font-weight:normal;color:#000;transform:scaleX(1.1000);transform-origin:0 0;letter-spacing:0.760px;">I&#x27;ve mapped out the feature-list and release schedule for the</div><div class="t" style="left:234px;top:253px;font-size:10px;line-height:10px;font-weight:normal;color:#000;transform:scaleX(1.1000);transform-origin:0 0;letter-spacing:0.761px;">next major update of L3DT. Be prepared for disappointment.</div><div class="t" style="left:633px;top:212px;font-size:10px;line-height:10px;font-weight:normal;color:#000;transform:scaleX(1.1386);transform-origin:0 0;-webkit-text-stroke:0.2px #000;">2.</div><div class="t" style="left:649.5px;top:212px;font-size:10px;line-height:10px;font-weight:normal;color:#5d8199;transform:scaleX(1.1000);transform-origin:0 0;letter-spacing:0.595px;">Surprise! L3DT 2.3d is available</div><div class="t" style="left:635px;top:240px;font-size:10px;line-height:10px;font-weight:normal;color:#000;transform:scaleX(1.1000);transform-origin:0 0;letter-spacing:0.669px;">There&#x27;s a new and unexpected update of L3DT now available,</div><div class="t" style="left:635px;top:253px;font-size:10px;line-height:10px;font-weight:normal;color:#000;transform:scaleX(1.1000);transform-origin:0 0;letter-spacing:0.661px;">which includes a fast heightfield preview option, some more</div><div class="t" style="left:635px;top:266px;font-size:10px;line-height:10px;font-weight:normal;color:#000;transform:scaleX(1.1000);transform-origin:0 0;letter-spacing:0.738px;">file-format options, and a few bug-fixes. Please read on for</div><div class="t" style="left:635px;top:279px;font-size:10px;line-height:10px;font-weight:normal;color:#000;transform:scaleX(1.1000);transform-origin:0 0;letter-spacing:0.817px;">more info.</div><div class="t" style="left:232px;top:356px;font-size:10px;line-height:10px;font-weight:normal;color:#000;transform:scaleX(1.1386);transform-origin:0 0;-webkit-text-stroke:0.2px #000;">3.</div><div class="t" style="left:248.5px;top:356px;font-size:10px;line-height:10px;font-weight:normal;color:#5d8199;transform:scaleX(1.1000);transform-origin:0 0;letter-spacing:0.646px;">Bug-fixes for L3DT 2.3c</div><div class="t" style="left:234px;top:384px;font-size:10px;line-height:10px;font-weight:normal;color:#000;transform:scaleX(1.1000);transform-origin:0 0;letter-spacing:0.627px;">There have been a few problems with L3DT 2.3c Professional,</div><div class="t" style="left:234px;top:397px;font-size:10px;line-height:10px;font-weight:normal;color:#000;transform:scaleX(1.1000);transform-origin:0 0;letter-spacing:0.752px;">some of them quite serious. A new update is available.</div><div class="t" style="left:633px;top:356px;font-size:10px;line-height:10px;font-weight:normal;color:#000;transform:scaleX(1.1386);transform-origin:0 0;-webkit-text-stroke:0.2px #000;">4.</div><div class="t" style="left:649.5px;top:356px;font-size:10px;line-height:10px;font-weight:normal;color:#5d8199;transform:scaleX(1.1000);transform-origin:0 0;letter-spacing:0.370px;">First RSS news feed</div><div class="t" style="left:635px;top:384px;font-size:10px;line-height:10px;font-weight:normal;color:#000;transform:scaleX(1.1000);transform-origin:0 0;letter-spacing:0.631px;">12 Jan 2006: Welcome to the RSS feed for L3DT news.</div><div class="t" style="left:78px;top:751px;font-size:11px;line-height:11px;font-weight:normal;color:#000;transform:scaleX(0.9317);transform-origin:0 0;">Done</div><div class="t" style="left:584px;top:751px;font-size:11px;line-height:11px;font-weight:normal;color:#000;transform:scaleX(0.9938);transform-origin:0 0;">Now: Clear, 12° C</div><div class="t" style="left:691px;top:751px;font-size:11px;line-height:11px;font-weight:normal;color:#000;transform:scaleX(0.9752);transform-origin:0 0;">Tue: 23° C</div><div class="t" style="left:759px;top:751px;font-size:11px;line-height:11px;font-weight:normal;color:#000;transform:scaleX(0.9790);transform-origin:0 0;">Tue: 16° C</div><div class="t" style="left:829px;top:751px;font-size:11px;line-height:11px;font-weight:normal;color:#000;transform:scaleX(0.9845);transform-origin:0 0;">Wed: 25° C</div><div class="t" style="left:906px;top:749px;font-size:10px;line-height:10px;font-weight:normal;color:#000;transform:scaleX(1.1396);transform-origin:0 0;">N/A</div><div class="t" style="left:965px;top:751px;font-size:11px;line-height:11px;font-weight:normal;color:#000;transform:scaleX(1.0249);transform-origin:0 0;">Fasterfox</div>
</body></html>
